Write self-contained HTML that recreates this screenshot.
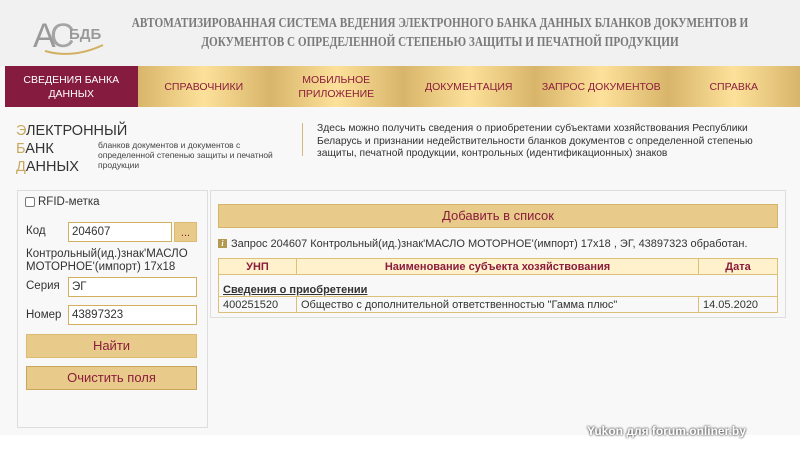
<!DOCTYPE html>
<html><head><meta charset="utf-8"><style>
*{margin:0;padding:0;box-sizing:border-box}
body{width:800px;height:455px;overflow:hidden;background:#f8f8f8;font-family:"Liberation Sans",sans-serif;position:relative;color:#333}
.hdr{position:absolute;left:0;top:0;width:800px;height:66px;background:#f1f1f1}
.title{position:absolute;left:40px;width:800px;top:13px;text-align:center;font:bold 13.5px/19px "Liberation Serif",serif;color:#7a7a7a;white-space:nowrap;transform:scaleX(0.83);transform-origin:400px 0}
.nav{position:absolute;left:5px;top:66px;width:795px;height:41px;display:flex}
.nav div{width:132.5px;height:41px;display:flex;align-items:center;justify-content:center;text-align:center;font-size:10.5px;line-height:14px;color:#8b1c3c;background:linear-gradient(90deg,#d8b56a,#fde19a 50%,#d8b56a)}
.nav div.act{background:#861b40;color:#fff}
.abs{position:absolute}
.box{position:absolute;background:#f8f8f8;border:1px solid #ddd}
input.t{position:absolute;height:20px;border:1px solid #d2b060;background:#fff;font:11.5px "Liberation Sans",sans-serif;padding-left:3px;color:#333}
.btn{position:absolute;background:#e8cb8a;color:#8b1c3c;text-align:center;border:1px solid #dcbc70}
table{border-collapse:collapse;font-size:11px}
td,th{border:1px solid #dcc07a;height:16px;padding:0 4px}
th{background:#fff1cc;color:#8b1c3c;font-weight:bold}
</style></head><body>
<div class="hdr"></div>
<div class="abs" style="left:33px;top:14px;width:72px;height:42px">
<svg width="72" height="42" viewBox="0 0 72 42"><text x="0" y="33" font-family="Liberation Sans" font-size="34" fill="#9a9a9a">A</text><text x="17" y="33" font-family="Liberation Sans" font-size="34" fill="#a5a5a5">C</text><text x="36" y="25" font-family="Liberation Sans" font-weight="bold" font-size="15" fill="#999">БДБ</text><path d="M12 37 Q40 45 70 31" stroke="#d2b060" stroke-width="2" fill="none"/></svg></div>
<div class="title">АВТОМАТИЗИРОВАННАЯ СИСТЕМА ВЕДЕНИЯ ЭЛЕКТРОННОГО БАНКА ДАННЫХ БЛАНКОВ ДОКУМЕНТОВ И<br>ДОКУМЕНТОВ С ОПРЕДЕЛЕННОЙ СТЕПЕНЬЮ ЗАЩИТЫ И ПЕЧАТНОЙ ПРОДУКЦИИ</div>
<div class="nav"><div class="act">СВЕДЕНИЯ БАНКА<br>ДАННЫХ</div><div>СПРАВОЧНИКИ</div><div>МОБИЛЬНОЕ<br>ПРИЛОЖЕНИЕ</div><div>ДОКУМЕНТАЦИЯ</div><div>ЗАПРОС ДОКУМЕНТОВ</div><div>СПРАВКА</div></div>
<div class="abs" style="left:16px;top:122px;font-size:14.5px;line-height:18px;color:#333"><span style="color:#c9a860">Э</span>ЛЕКТРОННЫЙ<br><span style="color:#c9a860">Б</span>АНК<br><span style="color:#c9a860">Д</span>АННЫХ</div>
<div class="abs" style="left:98px;top:140px;font-size:8.5px;line-height:10px;color:#444">бланков документов и документов с<br>определенной степенью защиты и печатной<br>продукции</div>
<div class="abs" style="left:302px;top:123px;width:1px;height:33px;background:#d0b880"></div>
<div class="abs" style="left:317px;top:123px;font-size:10.3px;line-height:12.5px;color:#333">Здесь можно получить сведения о приобретении субъектами хозяйствования Республики<br>Беларусь и признании недействительности бланков документов с определенной степенью<br>защиты, печатной продукции, контрольных (идентификационных) знаков</div>
<div class="box" style="left:17px;top:190px;width:191px;height:238px"></div>
<div class="abs" style="left:25px;top:197px;width:10px;height:10px;border:1px solid #777;background:#fff;border-radius:2px"></div>
<div class="abs" style="left:38px;top:196px;font-size:11.5px">RFID-метка</div>
<div class="abs" style="left:26px;top:225px;font-size:11.5px">Код</div>
<input class="t" style="left:68px;top:222px;width:104px" value="204607">
<div class="btn" style="left:174px;top:222px;width:23px;height:20px;font-size:11px;line-height:20px">...</div>
<div class="abs" style="left:26px;top:248px;font-size:11.5px;line-height:13px">Контрольный(ид.)знак'МАСЛО<br>МОТОРНОЕ'(импорт) 17x18</div>
<div class="abs" style="left:26px;top:280px;font-size:11.5px">Серия</div>
<input class="t" style="left:68px;top:277px;width:129px" value="ЭГ">
<div class="abs" style="left:26px;top:309px;font-size:11.5px">Номер</div>
<input class="t" style="left:68px;top:305px;width:129px" value="43897323">
<div class="btn" style="left:26px;top:334px;width:171px;height:24px;line-height:22px;font-size:13px">Найти</div>
<div class="btn" style="left:26px;top:366px;width:171px;height:24px;line-height:22px;font-size:13px;border-color:#c9a55a">Очистить поля</div>
<div class="box" style="left:210px;top:190px;width:576px;height:128px"></div>
<div class="btn" style="left:218px;top:204px;width:560px;height:24px;line-height:22px;font-size:13px;border-color:#d5b56a">Добавить в список</div>
<div class="abs" style="left:218px;top:239px;width:9px;height:9px;background:#b49a50;color:#fff;font:italic bold 8px/9px serif;text-align:center">i</div>
<div class="abs" style="left:231px;top:238px;font-size:11px">Запрос 204607 Контрольный(ид.)знак'МАСЛО МОТОРНОЕ'(импорт) 17x18 , ЭГ, 43897323 обработан.</div>
<table class="abs" style="left:218px;top:258px;width:560px">
<tr><th style="width:78px">УНП</th><th>Наименование субъекта хозяйствования</th><th style="width:79px">Дата</th></tr>
<tr><td colspan="3" style="height:22px;vertical-align:bottom;font-weight:bold;text-decoration:underline;font-size:11px">Сведения о приобретении</td></tr>
<tr><td>400251520</td><td>Общество с дополнительной ответственностью "Гамма плюс"</td><td>14.05.2020</td></tr>
</table>
<div class="abs" style="left:0;top:435px;width:800px;height:20px;background:#fff"></div>
<div class="abs" style="left:587px;top:424px;font:bold 12px 'Liberation Sans',sans-serif;color:#fff;text-shadow:0 0 2px #555,0 0 2px #555">Yukon для forum.onliner.by</div>
</body></html>
